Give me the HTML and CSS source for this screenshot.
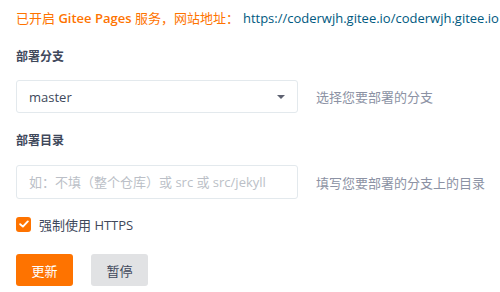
FILE: index.html
```html
<!DOCTYPE html>
<html lang="zh-CN">
<head>
    <meta charset="UTF-8">
    <title>Gitee Pages</title>
    <link rel="stylesheet" href="styles.css">
</head>
<body>
<div class="pages">
    <p class="notice">已开启 <b>Gitee Pages</b> 服务，网站地址：<a href="#" class="site-url">https://coderwjh.gitee.io/coderwjh.gitee.io</a></p>

    <div class="field">
        <label class="field-label">部署分支</label>
        <div class="field-row">
            <div class="select">
                <span class="select-text">master</span>
                <i class="caret"></i>
            </div>
            <span class="field-tip">选择您要部署的分支</span>
        </div>
    </div>

    <div class="field">
        <label class="field-label">部署目录</label>
        <div class="field-row">
            <input class="input" type="text" placeholder="如：不填（整个仓库）或 src 或 src/jekyll">
            <span class="field-tip">填写您要部署的分支上的目录</span>
        </div>
    </div>

    <label class="check">
        <span class="check-box">
            <svg width="10" height="8" viewBox="0 0 10 8"><path d="M1.2 4.2 L3.9 6.6 L8.8 1.4" fill="none" stroke="#fff" stroke-width="1.9" stroke-linecap="round" stroke-linejoin="round"/></svg>
        </span>
        <span class="check-text">强制使用 HTTPS</span>
    </label>

    <div class="actions">
        <button class="btn btn-orange">更新</button>
        <button class="btn btn-grey">暂停</button>
    </div>
</div>
</body>
</html>
```

FILE: styles.css
```css
*{
    margin: 0;
    padding: 0;
    box-sizing: border-box;
}

body{
    font-family: "Open Sans", "Noto Sans CJK SC", sans-serif;
    font-size: 13px;
    color: #40485b;
    background: #fff;
}

.pages{
    padding: 8px 0 8px 16px;
}

.notice{
    line-height: 20px;
    color: #fe7300;
    font-size: 13px;
    white-space: nowrap;
}

.notice b{
    font-weight: 600;
}

.site-url{
    color: #005980;
    text-decoration: none;
    margin-left: 4px;
}

.field{
    margin-top: 19px;
}

.field + .field{
    margin-top: 18px;
}

.field-label{
    display: block;
    font-size: 12px;
    font-weight: bold;
    line-height: 20px;
    color: #40485b;
}

.field-row{
    display: flex;
    align-items: center;
    margin-top: 13px;
}

.field + .field .field-row{
    margin-top: 14px;
}

.select,
.input{
    flex-shrink: 0;
    width: 282px;
    height: 33px;
    border: 1px solid #e3e9ed;
    border-radius: 3px;
    background: #fff;
    font-family: inherit;
    font-size: 13px;
    color: #40485b;
}

.select{
    display: flex;
    align-items: center;
    justify-content: space-between;
    padding: 0 12px;
}

.caret{
    width: 0;
    height: 0;
    border-left: 4px solid transparent;
    border-right: 4px solid transparent;
    border-top: 4px solid #5e6271;
}

.input{
    height: 34px;
    padding: 0 12px;
    outline: none;
}

.input::placeholder{
    color: #bbbfc7;
}

.field-tip{
    margin-left: 18px;
    color: #8c92a4;
    font-size: 13px;
    white-space: nowrap;
}

.check{
    display: flex;
    align-items: center;
    margin-top: 15px;
    height: 20px;
}

.check-box{
    width: 15px;
    height: 15px;
    border-radius: 3px;
    background: #fe7300;
    display: flex;
    align-items: center;
    justify-content: center;
}

.check-text{
    margin-left: 8px;
    color: #40485b;
}

.actions{
    display: flex;
    gap: 18px;
    margin-top: 20px;
}

.btn{
    width: 57px;
    height: 32px;
    border: none;
    border-radius: 3px;
    font-family: inherit;
    font-size: 13px;
    cursor: pointer;
}

.btn-orange{
    background: #fe7300;
    color: #fff;
}

.btn-grey{
    background: #e1e2e4;
    color: #40485b;
}
```
